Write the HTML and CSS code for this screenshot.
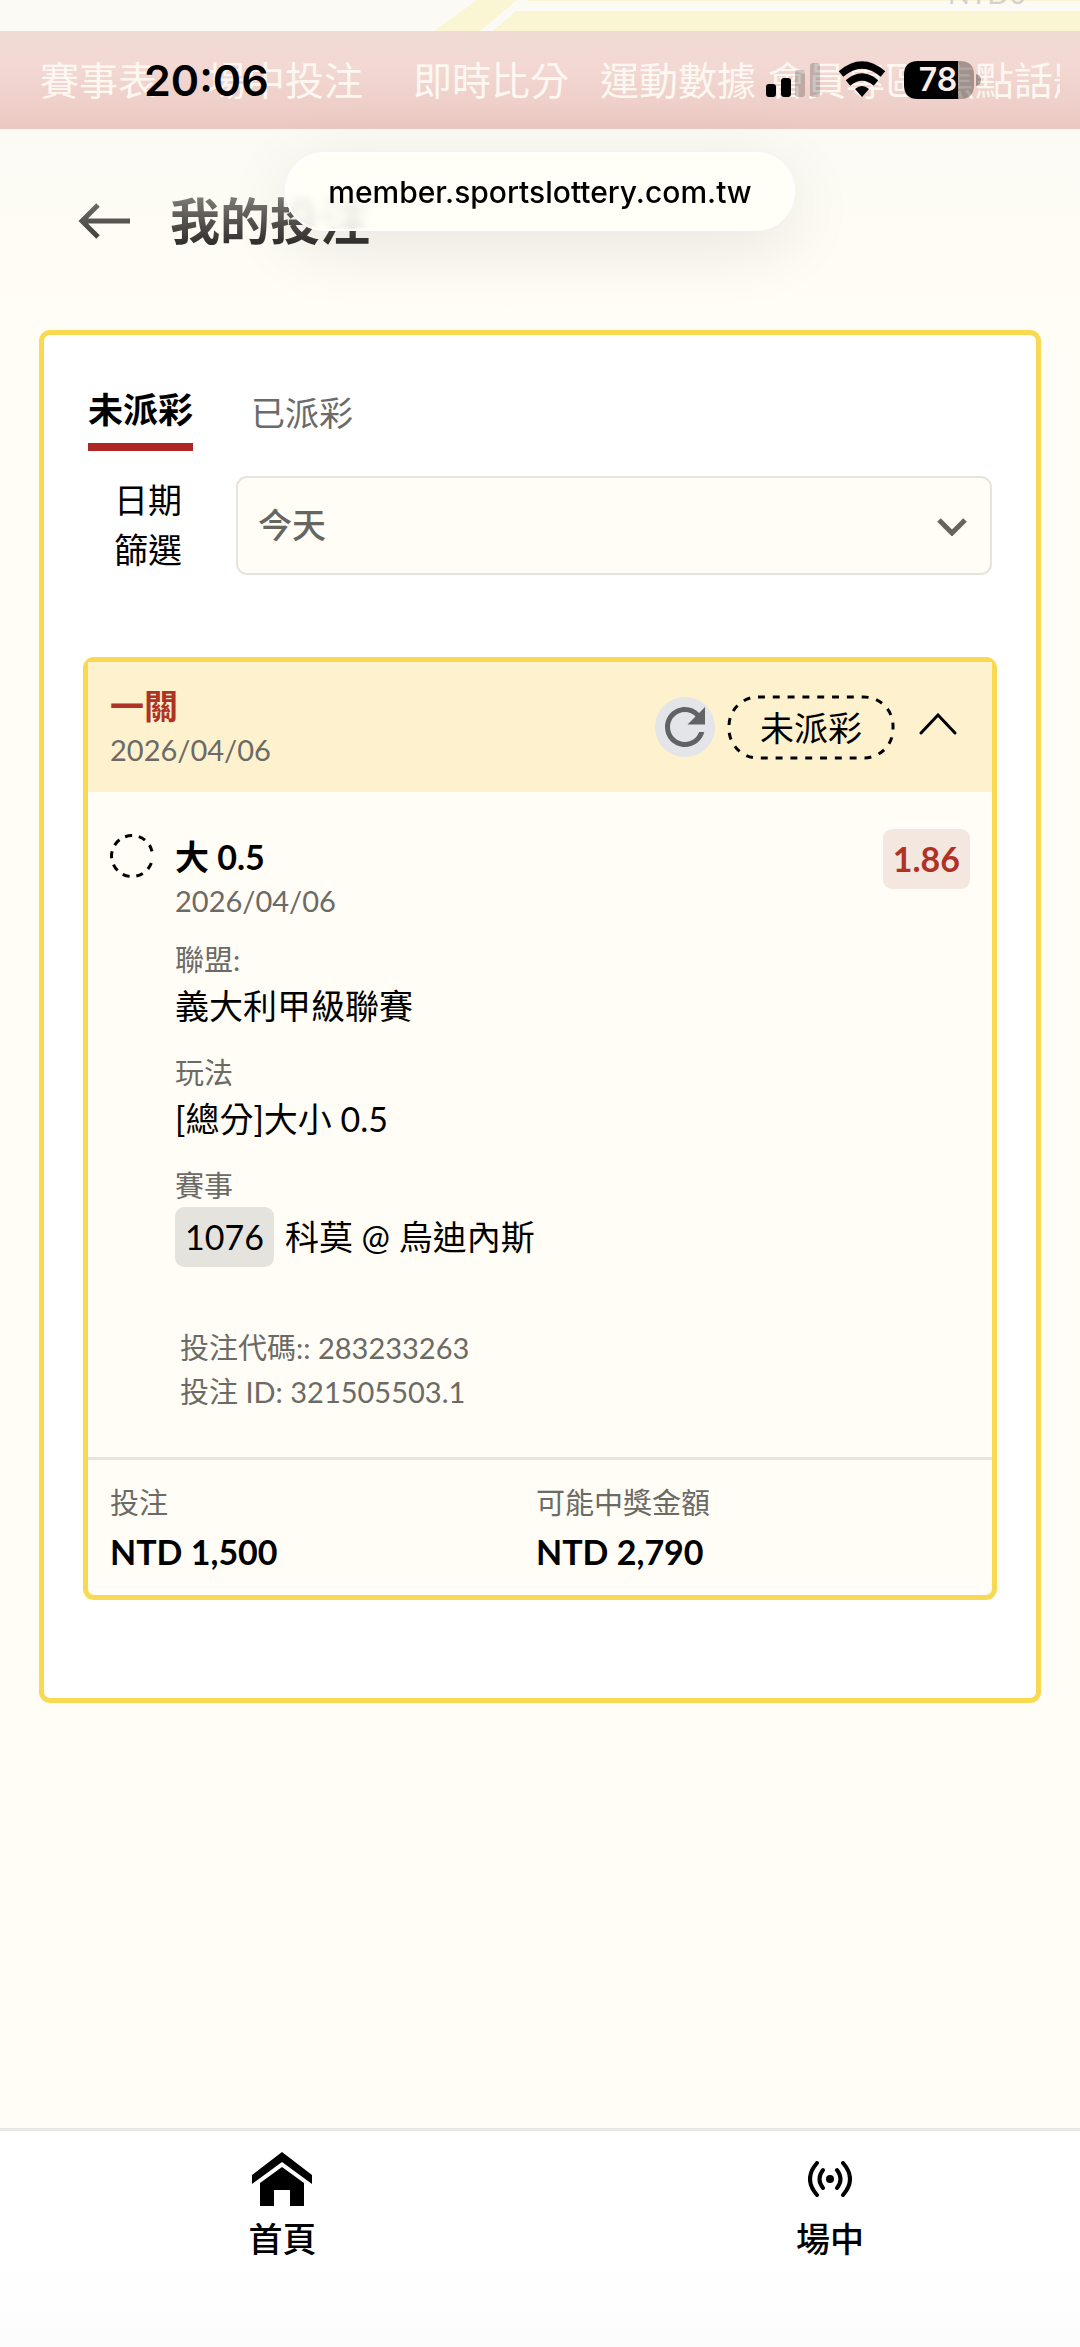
FILE: index.html
```html
<!DOCTYPE html>
<html lang="zh-Hant">
<head>
<meta charset="utf-8">
<meta name="viewport" content="width=device-width, initial-scale=1">
<title>我的投注</title>
<link rel="stylesheet" href="styles.css">
</head>
<body>
<div class="page">
  <div class="account-strip">
    <svg class="strip-lines" viewBox="0 0 1080 31" preserveAspectRatio="xMinYMin slice" aria-hidden="true">
      <path d="M434 31L477 0H517L480 31ZM493 31L516 11H1080V31ZM528 0H1080V1H528Z" fill="#faf5d2"/>
    </svg>
    <span class="balance">NTD0</span>
  </div>

  <nav class="site-nav" aria-label="主選單">
    <a href="#">賽事表</a>
    <a href="#">場中投注</a>
    <a href="#">即時比分</a>
    <a href="#">運動數據</a>
    <a href="#" class="tight">會員專區</a>
    <a href="#" class="tight">焦點話題</a>
  </nav>

  <div class="status-bar">
    <span class="clock">20:06</span>
    <svg class="status-icons" viewBox="0 0 216 40" aria-hidden="true">
      <rect x="0" y="24" width="10" height="13" rx="3"/>
      <rect x="15" y="18" width="10" height="19" rx="3"/>
      <rect x="29" y="10" width="10" height="27" rx="3" opacity=".2"/>
      <rect x="44" y="3" width="10" height="34" rx="3" opacity=".2"/>
      <g fill="none" stroke="#000" stroke-width="7">
        <path d="M75 14Q96 -4 117 14"/>
        <path d="M82 23Q96 11 110 23"/>
      </g>
      <path d="M89 29Q96 23 103 29L96 37Z"/>
      <path d="M192 1H194Q208 1 208 15V25Q208 39 194 39H192Z" opacity=".32"/>
      <path d="M152 1H192V39H152Q138 39 138 25V15Q138 1 152 1Z"/>
      <path d="M210 14Q215 15 215 20Q215 25 210 26Z" opacity=".32"/>
    </svg>
    <span class="battery-level">78</span>
  </div>

  <div class="address-pill">member.sportslottery.com.tw</div>

  <header class="page-head">
    <a href="#" class="back" aria-label="返回">
      <svg viewBox="0 0 52 36" width="52" height="36" fill="none" stroke="url(#fade)" stroke-width="5">
        <defs><linearGradient id="fade" gradientUnits="userSpaceOnUse" x1="0" y1="0" x2="0" y2="36"><stop offset="0" stop-color="#6c6b67"/><stop offset="1" stop-color="#41403d"/></linearGradient></defs>
        <path d="M52 18H5M20 2L4 18L20 34"/>
      </svg>
    </a>
    <h1>我的投注</h1>
  </header>

  <main class="panel">
    <div class="tabs" role="tablist">
      <button type="button" role="tab" aria-selected="true" class="tab active">未派彩</button>
      <button type="button" role="tab" aria-selected="false" class="tab">已派彩</button>
    </div>

    <div class="filter">
      <label for="range">日期<br>篩選</label>
      <div class="select-wrap">
        <select id="range"><option>今天</option></select>
        <svg viewBox="0 0 30 18" width="30" height="18" fill="none" stroke="#666560" stroke-width="5" aria-hidden="true"><path d="M2 2L15 15L28 2"/></svg>
      </div>
    </div>

    <article class="bet">
      <header class="bet-head">
        <div>
          <h2>一關</h2>
          <p class="date">2026/04/06</p>
        </div>
        <div class="bet-actions">
          <button type="button" class="refresh" aria-label="重新整理">
            <svg viewBox="0 0 24 24" width="60" height="60" fill="#606264"><path d="M17.65 6.35C16.2 4.9 14.21 4 12 4c-4.42 0-7.99 3.58-7.99 8s3.57 8 7.99 8c3.73 0 6.84-2.55 7.73-6h-2.08c-.82 2.33-3.04 4-5.65 4-3.31 0-6-2.69-6-6s2.69-6 6-6c1.66 0 3.14.69 4.22 1.78L13 11h7V4l-2.35 2.35z"/></svg>
          </button>
          <span class="state">
            <svg viewBox="0 0 168 65" aria-hidden="true"><rect x="2" y="2" width="164" height="61" rx="29" fill="none" stroke="#000" stroke-width="3" pathLength="405" stroke-dasharray="7 8"/></svg>
            未派彩
          </span>
          <button type="button" class="collapse" aria-label="收合">
            <svg viewBox="0 0 40 28" width="40" height="28" fill="none" stroke="#000" stroke-width="3" stroke-linecap="round"><path d="M3 20L20 2L37 20"/></svg>
          </button>
        </div>
      </header>

      <div class="bet-body">
        <svg class="pending" viewBox="0 0 44 44" width="44" height="44" fill="none" stroke="#000" stroke-width="3" stroke-dasharray="7 6.7" aria-hidden="true"><path d="M41.3 29A20.5 20.5 0 1 1 42 17.4"/></svg>
        <div class="details">
          <h3>大 0.5</h3>
          <p class="date">2026/04/06</p>
          <dl>
            <div><dt>聯盟:</dt><dd>義大利甲級聯賽</dd></div>
            <div><dt>玩法</dt><dd>[總分]大小 0.5</dd></div>
            <div><dt>賽事</dt><dd class="match"><span class="code">1076</span>科莫 @ 烏迪內斯</dd></div>
          </dl>
          <div class="refs">
            <p>投注代碼:: 283233263</p>
            <p>投注 ID: 321505503.1</p>
          </div>
        </div>
        <span class="odds">1.86</span>
      </div>

      <dl class="totals">
        <div><dt>投注</dt><dd>NTD 1,500</dd></div>
        <div><dt>可能中獎金額</dt><dd>NTD 2,790</dd></div>
      </dl>
    </article>
  </main>

  <nav class="bottom-nav" aria-label="底部選單">
    <a href="#">
      <span class="icon"><svg viewBox="0 0 60 54" width="60" height="54" aria-hidden="true"><path d="M30 0L60 23V32L30 10L0 32V23ZM30 15L52 31V54H38V38H22V54H8V31Z"/></svg></span>
      首頁
    </a>
    <a href="#">
      <span class="icon"><svg viewBox="0 0 44 36" width="44" height="36" fill="none" stroke="#000" stroke-width="4" stroke-linecap="round" aria-hidden="true"><circle cx="22" cy="18" r="4" fill="#000" stroke="none"/><path d="M35 2Q49 18 35 34M9 2Q-5 18 9 34M29 9Q36 18 29 27M15 9Q8 18 15 27"/></svg></span>
      場中
    </a>
  </nav>
</div>
</body>
</html>
```
FILE: styles.css
```css
* { box-sizing: border-box; }

body {
  margin: 0;
  background: #fffdf5;
  color: #000;
  font-family: Lato, "Noto Sans CJK TC", sans-serif;
  font-size: 34px;
  line-height: 50px;
}

h1, h2, h3, p, dl, dd { margin: 0; }
a { color: inherit; text-decoration: none; }
button, select { font: inherit; color: inherit; border: 0; background: none; padding: 0; margin: 0; }
svg { display: block; }

.page {
  position: relative;
  display: flex;
  flex-direction: column;
  min-height: 100vh;
  overflow: hidden;
}

/* scrolled-away account strip */
.account-strip {
  position: relative;
  height: 31px;
  overflow: hidden;
  background: #fcfaf5;
}
.strip-lines { width: 100%; height: 31px; }
.balance {
  position: absolute;
  right: 54px;
  bottom: 18px;
  font-size: 29px;
  line-height: 40px;
  color: #d3d2cd;
}

.site-nav {
  display: flex;
  align-items: center;
  gap: 50px;
  height: 98px;
  padding-left: 40px;
  border-right: 20px solid transparent;
  overflow: hidden;
  white-space: nowrap;
  background: linear-gradient(#f0dbd3, #f3d8d3 35%, #efd0ca 70%, #ebc8c1) border-box;
  color: #fcf8f1;
  font-size: 39px;
  line-height: 48px;
}
.site-nav a { flex: none; }
.site-nav a:nth-child(4) { margin-left: -19px; }
.site-nav .tight { margin-left: -38px; }

.status-bar {
  position: absolute;
  top: 60px;
  left: 0;
  right: 0;
  height: 40px;
  font-family: Inter, sans-serif;
  font-weight: 600;
  line-height: 40px;
}
.clock { position: absolute; left: 144px; font-size: 43px; }
.status-icons { position: absolute; right: 98px; width: 216px; height: 40px; }
.battery-level {
  position: absolute;
  right: 107px;
  width: 70px;
  text-align: center;
  font-size: 32px;
  color: #fbece8;
}

.address-pill {
  position: absolute;
  z-index: 2;
  top: 152px;
  left: 50%;
  width: 510px;
  height: 79px;
  border: 2px solid #fff;
  border-radius: 40px;
  transform: translateX(-50%);
  background: rgba(255, 255, 248, .88);
  backdrop-filter: blur(4px);
  box-shadow: 0 16px 70px rgba(0, 0, 0, .09);
  text-align: center;
  font-family: Inter, sans-serif;
  font-size: 30px;
  font-weight: 500;
  line-height: 76px;
}

.page-head {
  display: flex;
  align-items: center;
  gap: 40px;
  height: 201px;
  padding: 0 78px 18px;
  background: linear-gradient(#fbfaf4, #fffdf5 90%);
}
.page-head h1 {
  font-size: 50px;
  font-weight: 700;
  line-height: 74px;
  background: linear-gradient(#85847f 10%, #2b2a28 85%);
  -webkit-background-clip: text;
  background-clip: text;
  color: transparent;
}

.panel {
  margin: 0 39px 60px;
  padding: 40px 39px 98px;
  border: 5px solid #fad952;
  border-radius: 11px;
  background: #fff;
}

.tabs { display: flex; align-items: center; gap: 58px; padding: 0 5px; }
.tab { line-height: 68px; color: #6b6b6b; font-size: 34px; }
.tab.active {
  border-bottom: 8px solid #ae2722;
  color: #000;
  font-size: 35px;
  font-weight: 700;
}

.filter { display: flex; align-items: center; padding: 24px 5px 0; }
.filter label { padding: 0 54px 0 26px; }
.select-wrap { position: relative; flex: 1; }
.select-wrap select {
  display: block;
  width: 100%;
  height: 99px;
  padding: 0 20px;
  border: 2px solid #e6e4dd;
  border-radius: 11px;
  background: #fffdf5;
  color: #666560;
  font-weight: 500;
  appearance: none;
}
.select-wrap svg { position: absolute; right: 25px; top: 42px; }

.bet {
  margin-top: 82px;
  border: 5px solid #fad952;
  border-radius: 11px;
  background: #fffdf5;
}
.bet-head {
  display: flex;
  justify-content: space-between;
  padding: 21px 34px 21px 22px;
  background: #fdf2cd;
}
.bet-head h2 { color: #ae3325; font-size: 34px; font-weight: 700; line-height: 46px; }
.date { color: #6b6a66; font-size: 29px; line-height: 42px; }

.bet-actions { display: flex; align-items: center; gap: 12px; }
.refresh { width: 60px; height: 60px; border-radius: 50%; background: #e3e5e8; }
.state {
  position: relative;
  padding: 0 33px;
  line-height: 65px;
}
.state svg { position: absolute; inset: 0; width: 100%; height: 100%; }
.collapse { margin-left: 11px; }

.bet-body { display: flex; align-items: flex-start; padding: 37px 22px 43px; }
.pending { flex: none; margin-top: 5px; }
.details { flex: 1; padding: 5px 0 0 21px; }
.details h3 { font-size: 34px; font-weight: 700; line-height: 46px; }
.details dl { display: grid; gap: 20px; margin-top: 16px; }
dt, .refs { color: #6b6a66; font-size: 29px; line-height: 43px; }
.refs { line-height: 44px; }
.match { display: flex; align-items: center; gap: 11px; }
.code, .odds { padding: 0 10px; border-radius: 9px; line-height: 60px; }
.code { background: #e5e3dd; }
.odds { background: #f4e7e0; color: #ae3325; font-weight: 700; }
.refs { margin-top: 59px; padding-left: 5px; }

.totals {
  display: grid;
  grid-template-columns: 1fr 1fr;
  padding: 21px 30px 18px 22px;
  border-top: 3px solid #e6e4dd;
}
.totals dd { margin-top: 3px; font-weight: 700; }

.bottom-nav {
  display: flex;
  justify-content: space-between;
  margin-top: auto;
  padding: 21px 20% 86px 23%;
  border-top: 3px solid #e6e8e4;
  background: linear-gradient(#fff 60%, #fcfcfc);
  font-weight: 500;
  line-height: 44px;
}
.bottom-nav a { display: flex; flex-direction: column; align-items: center; gap: 11px; }
.icon { display: flex; align-items: center; height: 54px; }
```
